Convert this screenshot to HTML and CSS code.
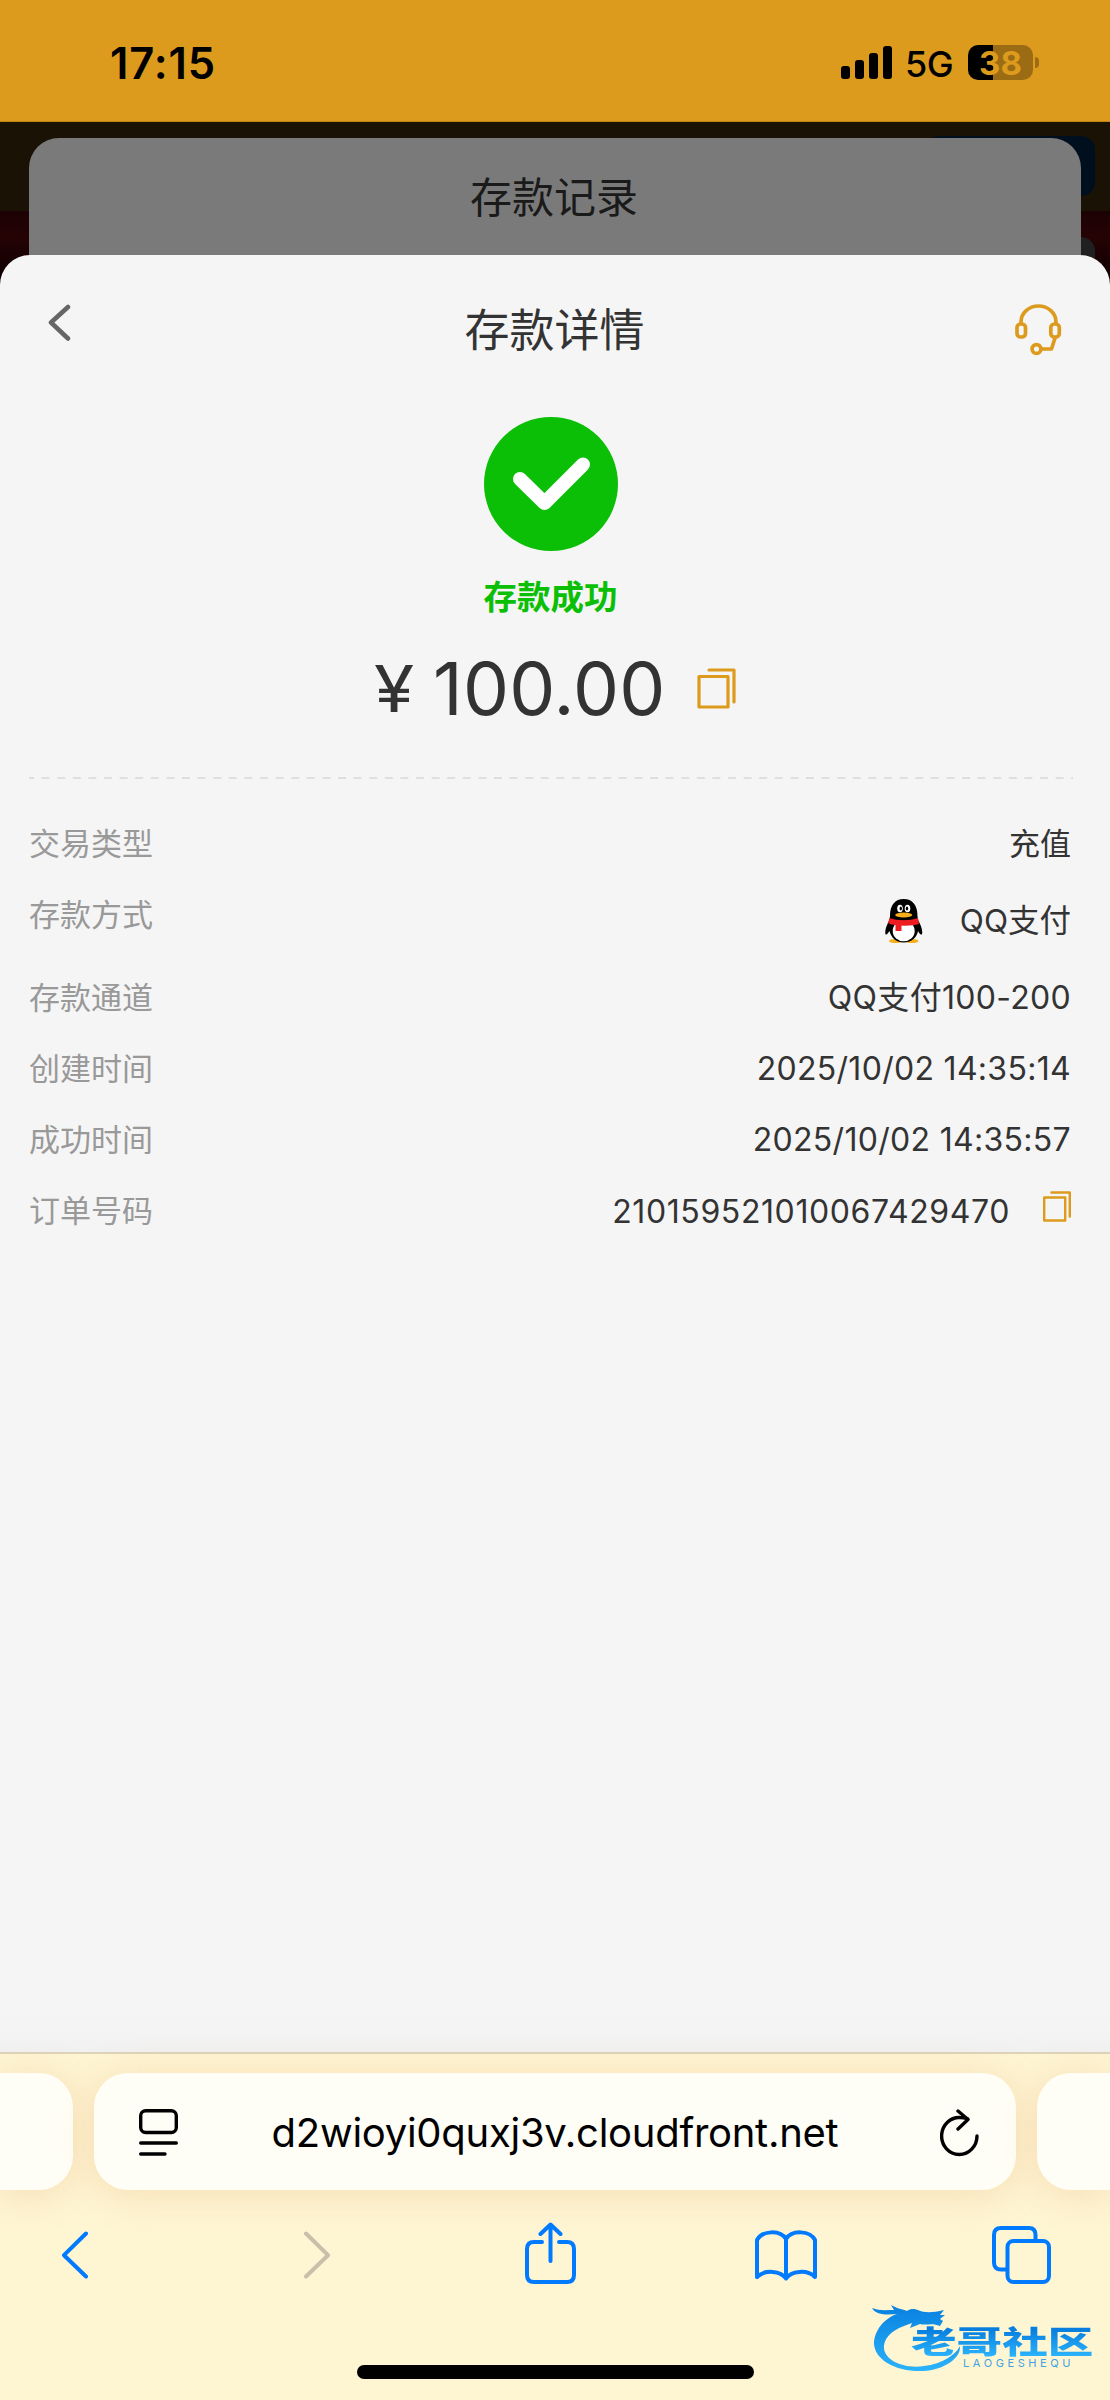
FILE: index.html
```
<!DOCTYPE html>
<html lang="zh-CN">
<head>
    <meta charset="UTF-8">
    <title>存款详情</title>
    <link rel="stylesheet" href="styles.css">
</head>
<body>
    <div class="status">
        <div class="clock">17:15</div>
        <div class="status-right">
            <svg class="signal" width="51" height="33" viewBox="0 0 51 33">
                <rect x="0" y="20" width="9" height="13" rx="3"/>
                <rect x="14" y="14" width="9" height="19" rx="3"/>
                <rect x="28" y="7" width="9" height="26" rx="3"/>
                <rect x="42" y="0" width="9" height="33" rx="3"/>
            </svg>
            <span class="net">5G</span>
            <div class="battery">38</div>
            <div class="nub"></div>
        </div>
    </div>

    <div class="page">
        <div class="back-btn1"></div>
        <div class="back-btn2"></div>
        <div class="record">存款记录</div>
        <div class="sheet">
            <div class="head">
                <svg class="back" width="24" height="38" viewBox="0 0 24 38">
                    <path d="M21 3L4 18.500L21 34.500"/>
                </svg>
                <h1>存款详情</h1>
                <svg class="service" width="47" height="53" viewBox="0 0 47 53">
                    <path d="M6 19v-1a17.500 16 0 0 1 35 0v1"/>
                    <rect x="2" y="20" width="8.500" height="13" rx="3.500"/>
                    <rect x="35.800" y="20" width="8.500" height="13" rx="3.500"/>
                    <path d="M40 34L36.500 45H27"/>
                    <circle cx="21.500" cy="45" r="4.400"/>
                </svg>
            </div>

            <div class="result">
                <svg class="ok" width="134" height="134" viewBox="0 0 134 134">
                    <circle cx="67" cy="67" r="67"/>
                    <path d="M36 62L60.500 86L99 47.500"/>
                </svg>
                <div class="ok-text">存款成功</div>
                <div class="amount">
                    <span class="yen">¥</span>
                    <span class="num">100.00</span>
                    <svg class="copy" width="39" height="41" viewBox="0 0 39 41">
                        <rect x="2" y="8.500" width="29" height="30.500"/>
                        <path d="M12 2H37V34"/>
                    </svg>
                </div>
            </div>

            <svg class="dash" width="1044" height="2" viewBox="0 0 1044 2">
                <path d="M0 1H1044"/>
            </svg>

            <ul class="list">
                <li><span>交易类型</span><b>充值</b></li>
                <li class="pay">
                    <span>存款方式</span>
                    <b>
                        <svg width="38" height="44" viewBox="0 0 38 44">
                            <ellipse cx="10.500" cy="42" rx="6.500" ry="2" fill="#f5b01b"/>
                            <ellipse cx="27" cy="42" rx="6.500" ry="2" fill="#f5b01b"/>
                            <path d="M5 17C5 6 10 0 18.700 0S32.500 6 32.500 17L33 21C36 26 38 32 37 35C36.500 37 34 34 33 32C32 38 27 43.500 18.700 43.500S6 38 4.500 32C3 34 1 37 .5 35C-.5 32 1.500 26 4.500 21Z" fill="#000"/>
                            <ellipse cx="18.700" cy="32" rx="11" ry="10.300" fill="#fff"/>
                            <ellipse cx="15" cy="9.500" rx="2.800" ry="3.800" fill="#fff"/>
                            <ellipse cx="22.500" cy="9.500" rx="2.800" ry="3.800" fill="#fff"/>
                            <ellipse cx="15.800" cy="9.500" rx="1.200" ry="2" fill="#000"/>
                            <ellipse cx="22" cy="9.500" rx="1.200" ry="2" fill="#000"/>
                            <ellipse cx="18.700" cy="16" rx="8.500" ry="2.500" fill="#f5b01b"/>
                            <path d="M4.500 19C13 22 24 22 33 19L34 25C29 26.500 22 27 16.500 26.500V32H10.500V26C8 26 5 25 3 24Z" fill="#ee1c20"/>
                        </svg>
                        QQ支付
                    </b>
                </li>
                <li><span>存款通道</span><b class="n">QQ支付100-200</b></li>
                <li><span>创建时间</span><b class="n">2025/10/02 14:35:14</b></li>
                <li><span>成功时间</span><b class="n">2025/10/02 14:35:57</b></li>
                <li class="order">
                    <span>订单号码</span>
                    <b class="n">
                        210159521010067429470
                        <svg class="copy" width="28" height="31" viewBox="0 0 28 31">
                            <rect x="1.200" y="6.500" width="21" height="23"/>
                            <path d="M8.500 1.500H26.800V25.500"/>
                        </svg>
                    </b>
                </li>
            </ul>
        </div>
    </div>

    <div class="browser">
        <div class="tabs">
            <div class="tab"></div>
            <div class="tab url">
                <svg width="39" height="48" viewBox="0 0 39 48">
                    <rect x="1.700" y="1.700" width="35.600" height="21.800" rx="5"/>
                    <path d="M1.700 34H37.300M1.700 45H26"/>
                </svg>
                <span>d2wioyi0quxj3v.cloudfront.net</span>
                <svg width="39" height="48" viewBox="0 0 39 48">
                    <path d="M27.500 9.800Q24 8.500 20 8.500A17.700 18.500 0 1 0 37 27"/>
                    <path d="M18 2L28 10.500L18 20"/>
                </svg>
            </div>
            <div class="tab"></div>
        </div>
        <div class="tools">
            <svg width="28" height="48" viewBox="0 0 28 48">
                <path d="M25 2.500L3 24.200L25 45.500"/>
            </svg>
            <svg class="off" width="28" height="48" viewBox="0 0 28 48">
                <path d="M3 2.500L25 24.200L3 45.500"/>
            </svg>
            <svg class="share" width="51" height="62" viewBox="0 0 51 62">
                <path d="M17 20H9Q2 20 2 27V53Q2 60 9 60H42Q49 60 49 53V27Q49 20 42 20H34"/>
                <path d="M25.500 39V3M15.500 12L25.500 2.500L35.500 12"/>
            </svg>
            <svg class="book" width="62" height="51" viewBox="0 0 62 51">
                <path d="M31 48.500C26 41 10 39 2 47V10C7 .5 25 -.5 31 9C37 -.5 55 .5 60 10V47C52 39 36 41 31 48.500V9"/>
            </svg>
            <svg class="pages" width="59" height="58" viewBox="0 0 59 58">
                <rect x="15.500" y="15" width="41.500" height="41" rx="6"/>
                <path d="M14 43.500H9Q2 43.500 2 36.500V9Q2 2 9 2H37Q43.500 2 43.500 9V14"/>
            </svg>
        </div>
        <div class="home"></div>

        <div class="mark">
            <svg width="94" height="76" viewBox="0 0 94 76">
                <defs>
                    <linearGradient id="blue" x1="0" y1="0" x2="0" y2="1">
                        <stop offset="0" stop-color="#0880df"/>
                        <stop offset="1" stop-color="#2bb3fb"/>
                    </linearGradient>
                </defs>
                <path fill="url(#blue)" d="M0 10C7 13 14 12 22 12L19 7C26 11 30 11 35 13C39 10 43 11 46 12C52 15 60 15 72 12L68 17H73L68 21L71 23L68 28C59 24 55 28 48 26L38 30L40 25L32 28C18 33 11 42 12 51C14 63 32 71 52 68C71 66 84 56 88 48C89 61 71 72 51 73C24 74 3 62 2 46C2 32 13 20 25 16C14 17 4 17 0 10Z"/>
            </svg>
            <div class="mark-cn">老哥社区</div>
            <div class="mark-en">LAOGESHEQU</div>
        </div>
    </div>
</body>
</html>
```
FILE: styles.css
```
*{
    margin: 0;
    padding: 0;
    box-sizing: border-box;
}
body{
    width: 1110px;
    height: 2400px;
    overflow: hidden;
    background: #fef5d3;
    font-family: Inter, "Noto Sans CJK SC", sans-serif;
    color: #333;
}
svg{
    display: block;
    flex: none;
    fill: none;
    stroke-linecap: round;
    stroke-linejoin: round;
}
/* 状态栏 */
.status{
    height: 122px;
    padding: 3px 71px 0 110px;
    background: #dd9b1d;
    border-bottom: 1px solid #bd8414;
    display: flex;
    align-items: center;
    justify-content: space-between;
    color: #000;
}
.clock{
    margin-top: 2px;
    font-size: 43.500px;
    font-weight: 600;
    letter-spacing: .9px;
}
.status-right{
    display: flex;
    align-items: center;
}
.signal{
    fill: #000;
}
.net{
    margin: 3px 0 0 13px;
    width: 63px;
    font-size: 36px;
    font-weight: 500;
    letter-spacing: -.5px;
}
.battery{
    width: 65px;
    height: 35px;
    border-radius: 10px;
    background: linear-gradient(90deg, #000 25px, #9c6c14 25px);
    color: #dd9b1d;
    font-size: 33px;
    font-weight: 700;
    line-height: 36px;
    text-align: center;
}
.nub{
    width: 4px;
    height: 11px;
    margin-left: 2px;
    border-radius: 0 4px 4px 0;
    background: #9c6c14;
}
/* 页面 */
.page{
    position: relative;
    height: 1930px;
    padding-top: 16px;
    background: linear-gradient(#1a1204 89px, #1c0204 89px, #250304 115px, #120002 150px);
}
.back-btn1, .back-btn2{
    position: absolute;
    right: 15px;
    width: 170px;
    height: 60px;
    top: 14px;
    border-radius: 14px;
    background: #000f1e;
}
.back-btn2{
    top: 115px;
    background: #202020;
}
.record{
    position: relative;
    height: 117px;
    margin: 0 29px;
    padding-right: 2px;
    border-radius: 30px 30px 0 0;
    background: #7a7a7a;
    color: #1a1a1a;
    font-size: 42px;
    line-height: 120px;
    text-align: center;
}
.sheet{
    position: relative;
    height: 1797px;
    padding: 0 30px;
    border-radius: 30px 30px 0 0;
    background: linear-gradient(#f5f5f5 1760px, #f1f1f1);
}
.head{
    height: 162px;
    padding: 49px 18px 0 17px;
    display: flex;
    justify-content: space-between;
    align-items: flex-start;
}
.head h1{
    margin: -6px 0 0 23px;
    font-size: 45px;
    font-weight: 400;
    line-height: 66px;
}
.back{
    stroke: #666;
    stroke-width: 4.500;
}
.service{
    stroke: #dd9b1d;
    stroke-width: 3.700;
}
.result{
    height: 360px;
    display: flex;
    flex-direction: column;
    align-items: center;
}
.ok{
    margin-right: 9px;
}
.ok circle{
    fill: #0bbf06;
}
.ok path{
    stroke: #fff;
    stroke-width: 14;
}
.ok-text{
    margin: 22px 9px 0 0;
    color: #0bbf06;
    font-size: 33.500px;
    font-weight: 700;
    line-height: 48px;
}
.amount{
    margin-top: 23px;
    height: 88px;
    display: flex;
    align-items: center;
}
.yen{
    width: 59px;
    font-size: 64px;
    transform: scaleX(1.140);
    transform-origin: 0 0;
}
.num{
    width: 264px;
    font-size: 73px;
    letter-spacing: .2px;
}
.copy{
    stroke: #dd9b1d;
    stroke-width: 3.200;
}
.dash{
    margin-left: -1px;
}
.dash path{
    stroke: #dfdfdf;
    stroke-width: 2;
    stroke-linecap: butt;
    stroke-dasharray: 8 7.600;
    stroke-dashoffset: 3;
}
.list{
    list-style: none;
    padding: 29px 9px 0 0;
}
.list li{
    height: 71px;
    display: flex;
    justify-content: space-between;
    font-size: 31px;
    line-height: 71px;
}
.list span{
    margin-left: -1px;
    color: #999;
}
.list b{
    display: flex;
    font-weight: 400;
}
.list .n{
    font-size: 32px;
    letter-spacing: .3px;
}
.list .pay{
    height: 83px;
}
.pay b{
    align-items: center;
    gap: 37px;
    font-size: 31.500px;
    line-height: 79px;
}
.order .n{
    gap: 33px;
    line-height: 73px;
    letter-spacing: .6px;
}
.order .copy{
    margin-top: 16px;
    stroke-width: 2.400;
}
/* 浏览器底栏 */
.browser{
    position: relative;
    height: 348px;
    border-top: 2px solid #ddd3b8;
    background: #fef5d3;
}
.tabs{
    padding-top: 19px;
    display: flex;
    gap: 21px;
}
.tab{
    width: 73px;
    height: 117px;
    border-radius: 0 34px 34px 0;
    background: #fffef6;
    box-shadow: 0 4px 36px rgba(228, 170, 110, .3);
}
.tab:last-child{
    border-radius: 34px 0 0 34px;
}
.url{
    width: 922px;
    padding: 2px 37px 0 45px;
    border-radius: 34px;
    display: flex;
    align-items: center;
    justify-content: space-between;
    color: #000;
    font-size: 40px;
}
.url span{
    margin-right: 8px;
    letter-spacing: -.270px;
}
.url svg{
    stroke: #000;
    stroke-width: 3.400;
}
.tools{
    height: 130px;
    padding-left: 61px;
    display: flex;
    align-items: center;
}
.tools svg{
    stroke: #007aff;
    stroke-width: 4;
}
.tools .off{
    margin-left: 214px;
    stroke: #cbbfac;
}
.tools .share{
    margin: -4px 0 0 194px;
}
.tools .book{
    margin-left: 179px;
}
.tools .pages{
    margin-left: 175px;
}
.home{
    width: 397px;
    height: 14px;
    margin: 45px auto 0;
    border-radius: 7px;
    background: #000;
}
/* 水印 */
.mark{
    position: absolute;
    left: 872px;
    top: 244px;
    width: 224px;
    height: 78px;
}
.mark-cn{
    position: absolute;
    left: 39px;
    top: 24px;
    font-size: 31px;
    font-weight: 900;
    line-height: 40px;
    white-space: nowrap;
    transform: scaleX(1.470);
    transform-origin: 0 0;
    background: linear-gradient(#087fdf 8px, #2bb3fb 34px);
    -webkit-background-clip: text;
    color: transparent;
}
.mark-en{
    position: absolute;
    left: 91px;
    top: 58px;
    color: #3fa3e4;
    font-size: 11px;
    line-height: 14px;
    letter-spacing: 3.600px;
}
```
